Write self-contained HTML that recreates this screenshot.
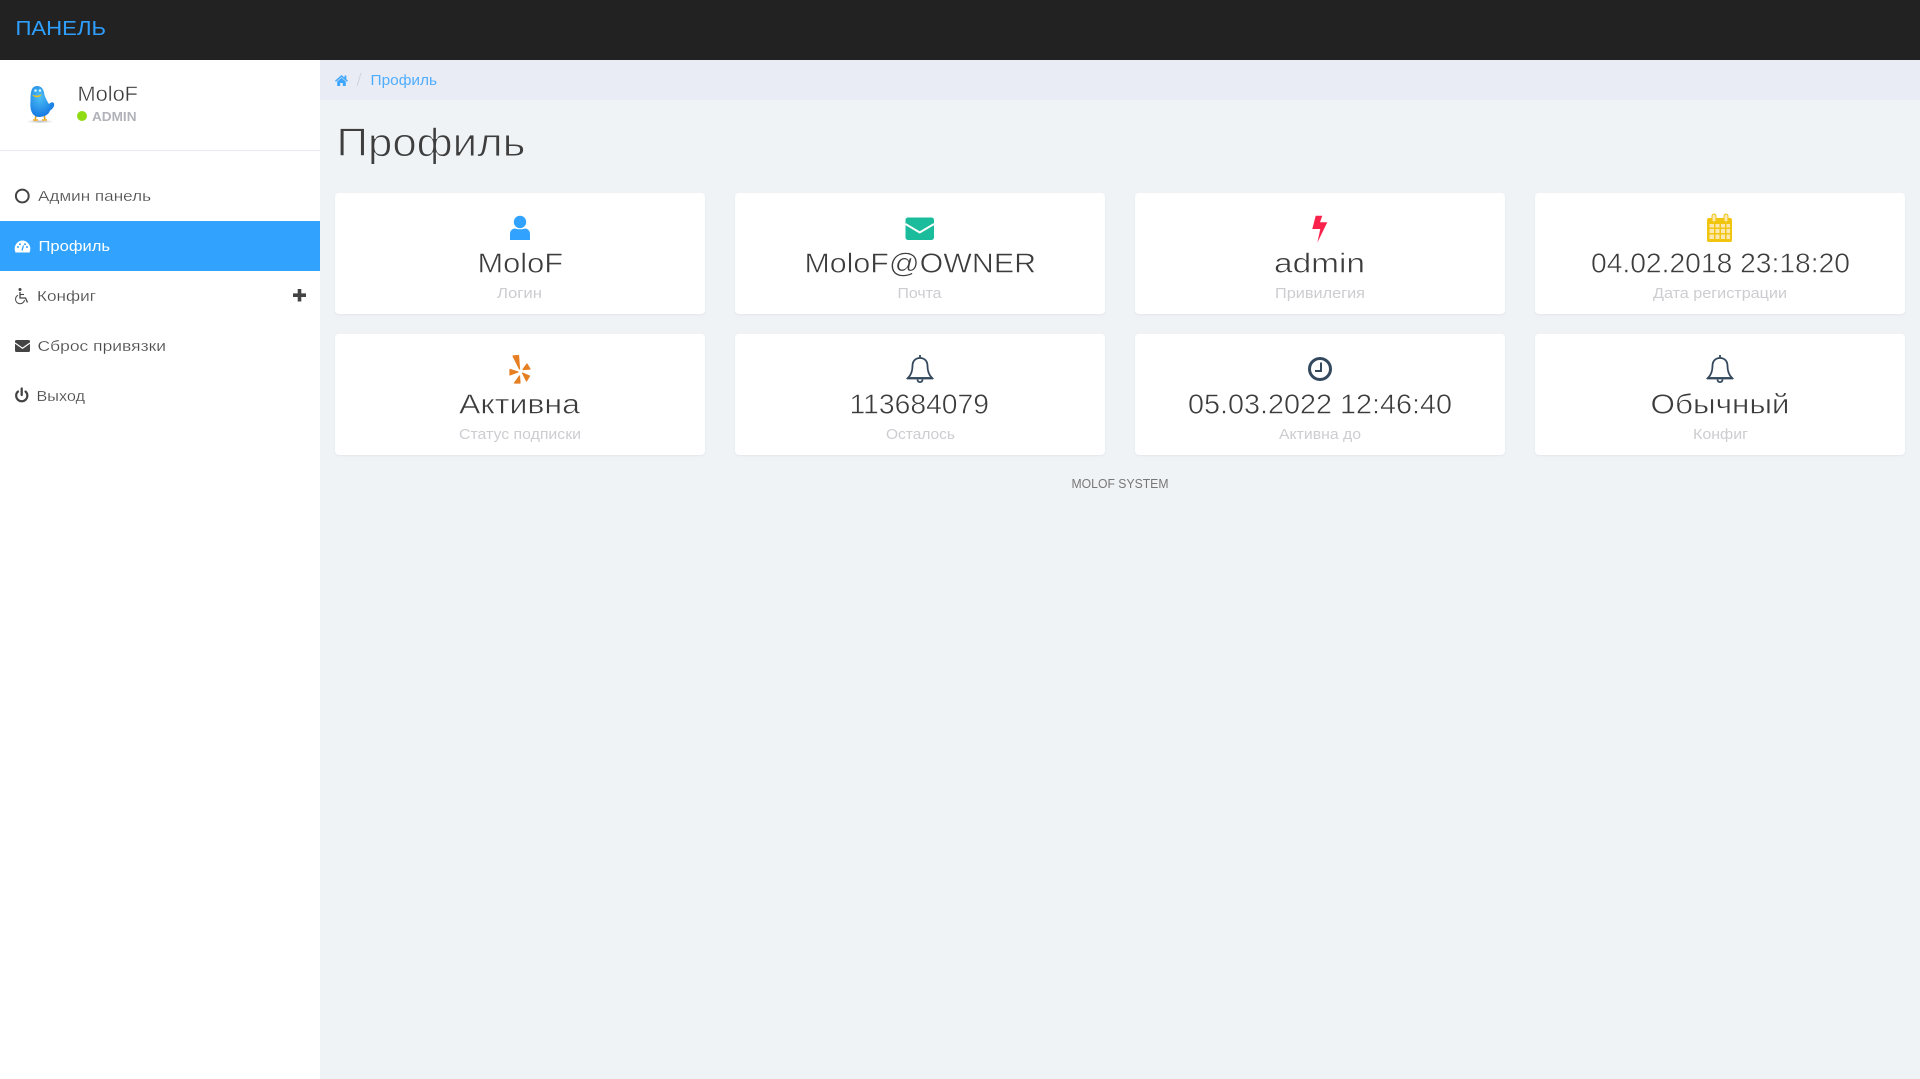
<!DOCTYPE html>
<html lang="ru">
<head>
<meta charset="utf-8">
<title>Профиль</title>
<style>
html,body{margin:0;padding:0;width:1920px;height:1079px;overflow:hidden;background:#f0f3f6;font-family:"Liberation Sans",sans-serif}
.b{position:absolute}
.card{position:absolute;width:370px;height:121px;background:#fff;border-radius:4px;box-shadow:0 1px 2px rgba(40,50,70,.07)}
svg{position:absolute;left:0;top:0}
text{font-family:"Liberation Sans",sans-serif}
.m{font-size:15px;fill:#4a4a4a;stroke:#fff;stroke-width:.2px}
.v{font-size:28px;fill:#3c3c3c;stroke:#fff;stroke-width:.55px}
.l{font-size:15px;fill:#cdcdd1}
</style>
</head>
<body>
<div class="b" style="left:0;top:0;width:1920px;height:60px;background:#222"></div>
<div class="b" style="left:0;top:60px;width:320px;height:1019px;background:#fff"></div>
<div class="b" style="left:0;top:150px;width:320px;height:1px;background:#e9ecf4"></div>
<div class="b" style="left:0;top:221px;width:320px;height:50px;background:#31a3ff"></div>
<div class="b" style="left:320px;top:60px;width:1600px;height:40px;background:#e9ecf4"></div>
<div class="card" style="left:335px;top:193px"></div>
<div class="card" style="left:735px;top:193px"></div>
<div class="card" style="left:1135px;top:193px"></div>
<div class="card" style="left:1535px;top:193px"></div>
<div class="card" style="left:335px;top:334px"></div>
<div class="card" style="left:735px;top:334px"></div>
<div class="card" style="left:1135px;top:334px"></div>
<div class="card" style="left:1535px;top:334px"></div>

<svg width="1920" height="1079" viewBox="0 0 1920 1079" xmlns="http://www.w3.org/2000/svg">
<defs>
<radialGradient id="bg" cx="40%" cy="35%" r="75%"><stop offset="0" stop-color="#4cc0f5"/><stop offset="1" stop-color="#0f6fe0"/></radialGradient>
<radialGradient id="sh"><stop offset="0" stop-color="#000" stop-opacity=".28"/><stop offset="1" stop-color="#000" stop-opacity="0"/></radialGradient>
</defs>

<!-- top bar -->
<text x="15.5" y="35" font-size="20" fill="#2f9fff" textLength="90.500" lengthAdjust="spacingAndGlyphs">ПАНЕЛЬ</text>

<!-- bird -->
<ellipse cx="40" cy="121.500" rx="14" ry="1.800" fill="url(#sh)"/>
<path d="M36 115l-1 6M44 114l1 6" stroke="#e8a020" stroke-width="1.600" fill="none"/>
<path d="M33 120h5M42 120h5" stroke="#f0b030" stroke-width="1.400"/>
<path d="M30.500 101C30.500 93 31 86 37 86C42 86 44 90 44.500 95C46 99 47.500 102 49 104C51 102 53 101.500 54 103.500C55 107 51 110 50 110.500C49 114.500 44 117 39 117C33 117 29.500 111 30.500 101Z" fill="url(#bg)"/>
<circle cx="35.500" cy="90.500" r="1.300" fill="#dff" opacity=".9"/><circle cx="40" cy="90.500" r="1.300" fill="#dff" opacity=".9"/>
<path d="M32 94.500C35 96 39 96 42 94C40 98 35 98.500 32 94.500Z" fill="#f3c21a"/>

<!-- user -->
<text x="77.500" y="101" font-size="21" fill="#3c3c3c" stroke="#fff" stroke-width=".4" textLength="60.500" lengthAdjust="spacingAndGlyphs">MoloF</text>
<circle cx="82" cy="116" r="5" fill="#8fdb14"/>
<text x="92" y="121" font-size="13" font-weight="700" fill="#b2b2ba" textLength="44.500" lengthAdjust="spacingAndGlyphs">ADMIN</text>

<!-- menu -->
<circle cx="22.300" cy="196" r="6.400" fill="none" stroke="#444" stroke-width="2"/>
<text class="m" x="38" y="201" textLength="113" lengthAdjust="spacingAndGlyphs">Админ панель</text>

<path d="M15.500 252.500C14.500 250 14.500 248 15 246.500C16 243 19 240.500 22.500 240.500C26 240.500 29 243 30 246.500C30.500 248 30.500 250 29.500 252.500Z" fill="#fff"/>
<circle cx="18" cy="247" r="1" fill="#31a3ff"/><circle cx="20" cy="244.300" r="1" fill="#31a3ff"/><circle cx="25" cy="244.300" r="1" fill="#31a3ff"/><circle cx="27" cy="247" r="1" fill="#31a3ff"/>
<path d="M22 250.500L23.500 245.500" stroke="#31a3ff" stroke-width="1.300"/>
<text x="38.500" y="251" font-size="15" fill="#fff" textLength="71.500" lengthAdjust="spacingAndGlyphs">Профиль</text>

<circle cx="20" cy="289.500" r="1.500" fill="#444"/>
<path d="M20 292V298H25.500L27.500 302.500" fill="none" stroke="#444" stroke-width="1.300"/>
<path d="M20 294.500H24" stroke="#444" stroke-width="1.100"/>
<path d="M18 295.200A4.500 4.500 0 1 0 24.500 300" fill="none" stroke="#444" stroke-width="1"/>
<text class="m" x="37" y="301" textLength="59" lengthAdjust="spacingAndGlyphs">Конфиг</text>
<path d="M293 295.200H306M299.500 289V301.500" stroke="#444" stroke-width="3.600"/>

<rect x="15" y="340" width="15" height="12" rx="1.500" fill="#444"/>
<path d="M15 343L22.500 348.300L30 343" fill="none" stroke="#fff" stroke-width="1.200"/>
<text class="m" x="37.500" y="351" textLength="128.500" lengthAdjust="spacingAndGlyphs">Сброс привязки</text>

<path d="M18 391.500A5.600 5.600 0 1 0 25.500 391.500" fill="none" stroke="#444" stroke-width="2.200" stroke-linecap="round"/>
<path d="M21.700 388.500V395" stroke="#444" stroke-width="2.300" stroke-linecap="round"/>
<text class="m" x="36.500" y="401" textLength="48.500" lengthAdjust="spacingAndGlyphs">Выход</text>

<!-- breadcrumb -->
<path d="M335 80.800L341.500 75L344.500 77.600V75.500H346.300V79.200L348 80.800L347 81.800L341.500 77L336 81.800Z" fill="#3ea6ff"/>
<path d="M337.200 81.500L341.500 77.800L345.800 81.500V86H342.800V83H340.200V86H337.200Z" fill="#3ea6ff"/>
<path d="M361 73L357.200 85.500" stroke="#d2d2d6" stroke-width="1"/>
<text x="370.500" y="85" font-size="15" fill="#4fadff" textLength="66.500" lengthAdjust="spacingAndGlyphs">Профиль</text>

<!-- title -->
<text x="336.500" y="156" font-size="40" fill="#3e3e3e" stroke="#f0f3f6" stroke-width=".95" textLength="189" lengthAdjust="spacingAndGlyphs">Профиль</text>

<!-- card 1 -->
<circle cx="520" cy="222" r="6.200" fill="#31a3ff"/>
<path d="M510 240V234C510 230 513 228.500 515.500 228.500C517 229.500 523 229.500 524.500 228.500C527 228.500 530 230 530 234V240Z" fill="#31a3ff"/>
<text class="v" x="477.500" y="272.700" textLength="85.500" lengthAdjust="spacingAndGlyphs">MoloF</text>
<text class="l" x="497" y="298" textLength="45" lengthAdjust="spacingAndGlyphs">Логин</text>

<!-- card 2 -->
<rect x="905.500" y="217.500" width="28.500" height="22.500" rx="2.500" fill="#1abc9c"/>
<path d="M905.500 224L919.700 232.500L934 224" fill="none" stroke="#fff" stroke-width="2"/>
<text class="v" x="804.500" y="272.700" textLength="231.500" lengthAdjust="spacingAndGlyphs">MoloF@OWNER</text>
<text class="l" x="897.500" y="298" textLength="44" lengthAdjust="spacingAndGlyphs">Почта</text>

<!-- card 3 -->
<path d="M1315.700 215.700H1322.300L1320 222.300H1327.300L1317.300 242.700L1320.300 229H1312.300Z" fill="#f9224b"/>
<text class="v" x="1274" y="272.700" textLength="91" lengthAdjust="spacingAndGlyphs">admin</text>
<text class="l" x="1275" y="298" textLength="90" lengthAdjust="spacingAndGlyphs">Привилегия</text>

<!-- card 4 -->
<rect x="1707" y="218" width="25" height="24" rx="2" fill="#f1c40f"/>
<g fill="#fbe8b0">
<rect x="1709.500" y="224" width="4.500" height="3.500"/><rect x="1715.500" y="224" width="4" height="3.500"/><rect x="1721" y="224" width="4" height="3.500"/><rect x="1726.500" y="224" width="3.500" height="3.500"/>
<rect x="1709.500" y="229" width="4.500" height="4"/><rect x="1715.500" y="229" width="4" height="4"/><rect x="1721" y="229" width="4" height="4"/><rect x="1726.500" y="229" width="3.500" height="4"/>
<rect x="1709.500" y="234.500" width="4.500" height="4.500"/><rect x="1715.500" y="234.500" width="4" height="4.500"/><rect x="1721" y="234.500" width="4" height="4.500"/><rect x="1726.500" y="234.500" width="3.500" height="4.500"/>
</g>
<rect x="1712" y="214" width="4" height="8" rx="2" fill="#fbe8b0" stroke="#f1c40f" stroke-width="1"/>
<rect x="1724" y="214" width="4" height="8" rx="2" fill="#fbe8b0" stroke="#f1c40f" stroke-width="1"/>
<text class="v" x="1591" y="272.500" textLength="259" lengthAdjust="spacingAndGlyphs">04.02.2018 23:18:20</text>
<text class="l" x="1653" y="298" textLength="134" lengthAdjust="spacingAndGlyphs">Дата регистрации</text>

<!-- card 5 -->
<g fill="#e67e22" stroke="#e67e22" stroke-width="1.200" stroke-linejoin="round">
<path d="M513 356L518.500 355.500L519.500 369Z"/>
<path d="M523 369.500L527 364L530 369Z"/>
<path d="M510 369.500L518 372L510 375Z"/>
<path d="M514.500 383L519.500 376L520 383Z"/>
<path d="M522.500 373L529.500 376L526.500 381Z"/>
</g>
<text class="v" x="459" y="413.700" textLength="121" lengthAdjust="spacingAndGlyphs">Активна</text>
<text class="l" x="459" y="439" textLength="122" lengthAdjust="spacingAndGlyphs">Статус подписки</text>

<!-- card 6 -->
<g fill="none" stroke="#34495e" stroke-width="1.800">
<path d="M908 378C911 375 912.500 371 912.500 366C912.500 361 915.500 358 920 358C924.500 358 927.500 361 927.500 366C927.500 371 929 375 932 378Z"/>
<path d="M920 355V358"/>
<path d="M907 378.300H933" stroke-width="2.200"/>
<path d="M917.500 379.500C917.500 383 922.500 383 922.500 379.500"/>
</g>
<text class="v" x="849.500" y="413.500" textLength="139.500" lengthAdjust="spacingAndGlyphs">113684079</text>
<text class="l" x="886" y="439" textLength="69" lengthAdjust="spacingAndGlyphs">Осталось</text>

<!-- card 7 -->
<circle cx="1320" cy="369" r="10.500" fill="none" stroke="#34495e" stroke-width="3"/>
<path d="M1321 362.500V371H1315" fill="none" stroke="#34495e" stroke-width="2"/>
<text class="v" x="1188" y="413.500" textLength="264" lengthAdjust="spacingAndGlyphs">05.03.2022 12:46:40</text>
<text class="l" x="1279" y="439" textLength="82" lengthAdjust="spacingAndGlyphs">Активна до</text>

<!-- card 8 -->
<g fill="none" stroke="#34495e" stroke-width="1.800" transform="translate(800 0)">
<path d="M908 378C911 375 912.500 371 912.500 366C912.500 361 915.500 358 920 358C924.500 358 927.500 361 927.500 366C927.500 371 929 375 932 378Z"/>
<path d="M920 355V358"/>
<path d="M907 378.300H933" stroke-width="2.200"/>
<path d="M917.500 379.500C917.500 383 922.500 383 922.500 379.500"/>
</g>
<text class="v" x="1650.500" y="413.700" textLength="139" lengthAdjust="spacingAndGlyphs">Обычный</text>
<text class="l" x="1693" y="439" textLength="55" lengthAdjust="spacingAndGlyphs">Конфиг</text>

<!-- footer -->
<text x="1071.500" y="488" font-size="13" fill="#777" textLength="97" lengthAdjust="spacingAndGlyphs">MOLOF SYSTEM</text>
</svg>
</body>
</html>
